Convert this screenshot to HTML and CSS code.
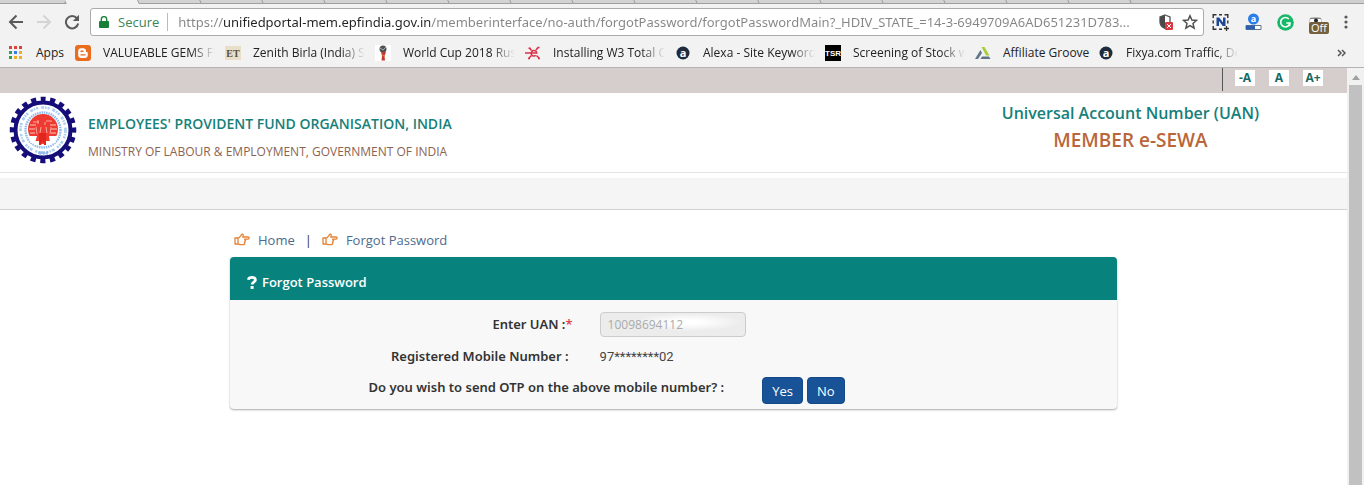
FILE: index.html
```html
<!DOCTYPE html>
<html lang="en">
<head>
<meta charset="utf-8">
<title>Forgot Password</title>
<link rel="stylesheet" href="styles.css">
</head>
<body>
<div class="tabs" aria-hidden="true">
  <i class="tab tab-first"></i><i class="tab tab-active"></i>
  <i class="tab"></i><i class="tab"></i><i class="tab"></i><i class="tab"></i><i class="tab"></i><i class="tab"></i><i class="tab"></i><i class="tab"></i>
  <i class="tab"></i><i class="tab"></i><i class="tab"></i><i class="tab"></i><i class="tab"></i><i class="tab"></i><i class="tab"></i><i class="tab"></i><i class="tab-rest"></i>
</div>
<div class="toolbar">
  <div class="nav-buttons">
    <button class="icon-btn" aria-label="Back"><svg width="16" height="16" viewBox="0 0 16 16" fill="none" stroke="#5a5a5a" stroke-width="2"><path d="M15 8H2M8.500 1.500 2 8l6.500 6.500"/></svg></button>
    <button class="icon-btn" aria-label="Forward"><svg width="16" height="16" viewBox="0 0 16 16" fill="none" stroke="#d4d4d4" stroke-width="2"><path d="M1 8h13M7.500 1.500 14 8l-6.500 6.500"/></svg></button>
    <button class="icon-btn" aria-label="Reload"><svg width="16" height="16" viewBox="0 0 16 16"><path d="M13 4.300A6.200 6.200 0 1 0 14.200 9.500" fill="none" stroke="#5a5a5a" stroke-width="2"/><path d="M15 .8v6.200H8.800z" fill="#5a5a5a"/></svg></button>
  </div>
  <div class="omnibox">
    <svg width="10" height="12" viewBox="0 0 10 12"><path d="M1 5h8a1 1 0 0 1 1 1v5a1 1 0 0 1-1 1H1a1 1 0 0 1-1-1V6a1 1 0 0 1 1-1z" fill="#188038"/><path d="M2.300 6V3.300a2.700 2.700 0 0 1 5.400 0V6" fill="none" stroke="#188038" stroke-width="1.400"/></svg>
    <span class="secure">Secure</span>
    <input class="url" aria-label="Address" value="https://unifiedportal-mem.epfindia.gov.in/memberinterface/no-auth/forgotPassword/forgotPasswordMain?_HDIV_STATE_=14-3-6949709A6AD651231D783...">
    <svg width="14" height="16" viewBox="0 0 14 16"><path d="M6 1 11 3v5c0 3-2 5-5 6.500C2.500 13 1 11 1 8V3z" fill="#fff" stroke="#555" stroke-width="1.300"/><path d="M6 1v13.500C2.500 13 1 11 1 8V3z" fill="#4a4a4a"/><rect x="6" y="8" width="8" height="8" rx="1" fill="#d93a3f"/><path d="m8 10 4 4m0-4-4 4" stroke="#fff"/></svg>
    <button class="icon-btn" aria-label="Bookmark this page"><svg width="16" height="16" viewBox="0 0 16 16"><path d="m8 1.700 1.900 4.300 4.600.4-3.500 3.100 1.100 4.600L8 11.600l-4.100 2.500L5 9.500 1.500 6.400l4.600-.4z" fill="none" stroke="#505050" stroke-width="1.500"/></svg></button>
  </div>
  <div class="extensions">
    <button class="icon-btn" aria-label="Capture"><svg width="18" height="18" viewBox="0 0 18 18"><path d="M1.200 5V1.700h3.300M7 1.700h3M12.500 1.700h3.300V5M1.200 7.500v3M15.800 7.500v3M1.200 13v3.300h3.300M7 16.300h3" fill="none" stroke="#333" stroke-width="1.400"/><path d="M4.500 13V4.500h2.700l3.800 5v-5h2.500V13h-2.700L7 8v5z" fill="#1b4796"/><path d="M12 15.500h5M14.500 13v5" stroke="#333" stroke-width="1.300"/></svg></button>
    <button class="icon-btn" aria-label="Alexa toolbar"><svg width="17" height="18" viewBox="0 0 17 18"><circle cx="8.500" cy="6" r="5.500" fill="#2b7de9"/><text x="8.500" y="9" text-anchor="middle" class="glyph-a">a</text><path d="M1 12.500h15v4H1z" fill="#fff" stroke="#64748b"/><path d="M1 12.500h9v4H1z" fill="#2c5fae"/></svg></button>
    <button class="icon-btn" aria-label="Grammar checker"><svg width="17" height="17" viewBox="0 0 17 17"><circle cx="8.500" cy="8.500" r="8.300" fill="#17b86a"/><path d="M11.800 5A4.700 4.700 0 1 0 13 9H9.300m3.700 0-.5 3" fill="none" stroke="#fff" stroke-width="1.600"/></svg></button>
    <button class="icon-btn off" aria-label="Extension off"><svg width="14" height="10" viewBox="0 0 14 10"><rect x=".5" y=".5" width="12" height="7" rx="3" fill="#fff" stroke="#bbb"/><path d="M1 1.500h11" stroke="#888"/><circle cx="7" cy="3.500" r="2" fill="#222"/></svg><span class="off-badge">Off</span></button>
    <button class="icon-btn" aria-label="Menu"><svg width="4" height="14" viewBox="0 0 4 14" fill="#5a5a5a"><circle cx="2" cy="2" r="1.600"/><circle cx="2" cy="7" r="1.600"/><circle cx="2" cy="12" r="1.600"/></svg></button>
  </div>
</div>
<nav class="bookmarks" aria-label="Bookmarks">
  <a class="bm bm-apps" href="#"><svg width="14" height="14" viewBox="0 0 14 14"><path d="M0 0h3v3H0zM5 0h3v3H5zM10 0h3v3h-3z" fill="#d8433c"/><path d="M0 5h3v3H0z" fill="#2f9e57"/><path d="M5 5h3v3H5z" fill="#3b78e7"/><path d="M10 5h3v3h-3zM5 10h3v3H5zM10 10h3v3h-3z" fill="#ecae29"/><path d="M0 10h3v3H0z" fill="#2f9e57"/></svg><span>Apps</span></a>
  <a class="bm" href="#"><svg width="16" height="16" viewBox="0 0 16 16"><rect width="16" height="16" rx="3" fill="#e96c1f"/><path d="M6 3.300h2.200c1.700 0 2.800 1 2.800 2.700 0 1 .3 1.100 1.200 1.200.5 0 .6.300.6.700v2c0 1.800-1.200 3-3 3H6.200c-1.800 0-3-1.200-3-3V6.300c0-1.800 1.200-3 2.800-3z" fill="#fff"/><path d="M6 6.200h2M6 9.900h4" stroke="#e96c1f" stroke-width="1.400" stroke-linecap="round"/></svg><span class="bm-text">VALUEABLE GEMS FF</span></a>
  <a class="bm" href="#"><svg width="16" height="16" viewBox="0 0 16 16"><rect width="16" height="14" y="1" fill="#e9dfc9"/><text x="8" y="12" text-anchor="middle" class="glyph-et">ET</text></svg><span class="bm-text">Zenith Birla (India) S</span></a>
  <a class="bm" href="#"><svg width="16" height="16" viewBox="0 0 16 16"><rect width="16" height="16" fill="#fff"/><circle cx="8" cy="4" r="3.500" fill="#53514f"/><path d="m5 3 3 2 3-3" stroke="#9bb3b0" fill="none"/><path d="M6 7h5l-1.500 4 .5 4.500H6.500L7 11z" fill="#c53a2c"/><path d="m6.500 9 3.500 3" stroke="#c99a46"/></svg><span class="bm-text">World Cup 2018 Rus</span></a>
  <a class="bm" href="#"><svg width="16" height="16" viewBox="0 0 16 16" fill="none" stroke="#dc2f45" stroke-width="1.500"><path d="M0 8h6M4.500 3l2 2.500M13 2.500 11 5M4 13l2.500-2.500M14 13l-2.500-2.500"/><path d="M6.500 8h5.300a2.800 2.800 0 1 0-1 2.400"/><path d="M3.500 3.200h2M12.500 2.500h2M3 13.500h2M13 13.500h2"/></svg><span class="bm-text">Installing W3 Total C</span></a>
  <a class="bm" href="#"><svg width="16" height="16" viewBox="0 0 16 16"><circle cx="8" cy="8" r="6.500" fill="#1d2b3c"/><text x="8" y="11.500" text-anchor="middle" class="glyph-alexa">a</text></svg><span class="bm-text">Alexa - Site Keyword</span></a>
  <a class="bm" href="#"><svg width="16" height="16" viewBox="0 0 16 16"><rect width="16" height="16" fill="#000"/><text x="8" y="11" text-anchor="middle" class="glyph-tsr">TSR</text></svg><span class="bm-text">Screening of Stock w</span></a>
  <a class="bm bm-short" href="#"><svg width="16" height="16" viewBox="0 0 16 16"><path d="M5.500 5 7 8l-4 6H0z" fill="#60758a"/><path d="M6.500 2h3l5 8.500h-3.500z" fill="#a6ce39"/><path d="M7 11.500h7L15.500 14H5.500z" fill="#60758a"/></svg><span>Affiliate Groove</span></a>
  <a class="bm" href="#"><svg width="16" height="16" viewBox="0 0 16 16"><circle cx="8" cy="8" r="6.500" fill="#1d2b3c"/><text x="8" y="11.500" text-anchor="middle" class="glyph-alexa">a</text></svg><span class="bm-text">Fixya.com Traffic, De</span></a>
  <button class="icon-btn more" aria-label="More bookmarks"><svg width="9" height="8" viewBox="0 0 9 8" fill="none" stroke="#555" stroke-width="1.500"><path d="m1 1 3 3-3 3M5 1l3 3-3 3"/></svg></button>
</nav>
<div class="viewport">
  <div class="page">
    <div class="access-bar">
      <div class="sizes"><button class="size-btn">-A</button><button class="size-btn">A</button><button class="size-btn">A+</button></div>
    </div>
    <header class="header">
      <svg class="logo" width="68" height="68" viewBox="0 0 68 68" role="img" aria-label="EPFO emblem">
        <circle cx="34" cy="34" r="31" fill="none" stroke="#150e78" stroke-width="4.500" stroke-dasharray="5.200 4.539" stroke-dashoffset="2.600" transform="rotate(-90 34 34)"/>
        <circle cx="34" cy="34" r="27.500" fill="#fff" stroke="#150e78" stroke-width="4"/>
        <circle cx="34" cy="34" r="22.500" fill="none" stroke="#a9cdf3" stroke-width="2.600" stroke-dasharray="3 1 1.500 1 2 3"/>
        <circle cx="34" cy="34" r="17.500" fill="none" stroke="#8fbcf0" stroke-width="2.400" stroke-dasharray="1.500 .8"/>
        <circle cx="34" cy="33" r="15" fill="#ee3a30"/>
        <path d="M21 29h6M41 29h6M20 33h6M42 33h6M21 37h5M42 37h5" stroke="#ffc7bc"/>
        <path d="M24 26h6M37 25h6M29 24v4M36 26v3M27 31l1 7M32 31l-1 6M37 31l1 6M42 31l-1 7" stroke="#ffb3a8" stroke-width=".9"/>
        <path d="M19 40h9l-2 7h-4zM40 40h9l-3 7h-5z" fill="#fff"/>
        <path d="M24 45h7v4h-6zM37 45h7l-1 4h-6z" fill="#fff"/>
        <path d="M30 37h7v12h-2l-1-5-2 5h-2z" fill="#e2261e"/>
        <path d="M29 57h10M31 55v5M35 55v5M38 55v4" stroke="#7fa8e4"/>
      </svg>
      <div class="org">
        <div class="org-name">EMPLOYEES' PROVIDENT FUND ORGANISATION, INDIA</div>
        <div class="org-sub">MINISTRY OF LABOUR &amp; EMPLOYMENT, GOVERNMENT OF INDIA</div>
      </div>
      <div class="portal">
        <div class="portal-name">Universal Account Number (UAN)</div>
        <div class="portal-sub">MEMBER e-SEWA</div>
      </div>
    </header>
    <div class="nav-strip"></div>
    <main class="content">
      <svg width="0" height="0" class="defs"><symbol id="hand" viewBox="0 0 16 14"><path d="M1 5h3v6H1zM4 5.200c2-.4 2.800-2.600 3.500-3.700.6-.8 1.900-.3 1.700.9L8.700 4H14c1.500 0 1.500 2.200 0 2.200h-3.500c1.500.2 1.400 1.900 0 1.900 1 .2 1 1.700-.2 1.800.7.500.3 1.700-.8 1.700H7c-1.300 0-2-.6-3-.6" fill="none" stroke="#e58235" stroke-width="1.300" stroke-linejoin="round"/></symbol></svg>
      <nav class="crumbs" aria-label="Breadcrumb">
        <svg width="16" height="14"><use href="#hand"/></svg><a class="crumb" href="#">Home</a>
        <span class="bar">|</span>
        <svg width="16" height="14"><use href="#hand"/></svg><a class="crumb" href="#">Forgot Password</a>
      </nav>
      <section class="card">
        <h1 class="card-head"><svg width="10" height="13" viewBox="0 0 10 13"><path d="M1.300 3.800C2 .8 8.400.5 8.400 3.900c0 2.400-3.300 2.200-3.300 4.600" fill="none" stroke="#fff" stroke-width="2.800"/><path d="M3.600 10h3v3h-3z" fill="#fff"/></svg><span>Forgot Password</span></h1>
        <form class="card-body">
          <div class="row"><label class="label label-req" for="uan">Enter UAN :<span class="req">*</span></label><input id="uan" class="uan" value="10098694112" readonly></div>
          <div class="row"><span class="label">Registered Mobile Number :</span><span class="mobile">97********02</span></div>
          <div class="row row-wide"><span class="label label-wide">Do you wish to send OTP on the above mobile number? :</span><span class="actions"><button type="button" class="btn">Yes</button><button type="button" class="btn">No</button></span></div>
        </form>
      </section>
    </main>
  </div>
  <div class="scrollbar" aria-hidden="true"><svg width="8" height="5" viewBox="0 0 8 5"><path d="M0 5 4 0l4 5z" fill="#a0a0a0"/></svg><div class="thumb"></div></div>
</div>
</body>
</html>
```
FILE: styles.css
```css
* { box-sizing: border-box; }
body {
  margin: 0;
  height: 100vh;
  display: flex;
  flex-direction: column;
  overflow: hidden;
  font-family: "Open Sans", "Noto Sans", sans-serif;
  font-size: 13px;
  color: #333;
  background: #fff;
}
button, input { font: inherit; }
a { color: inherit; text-decoration: none; }
svg { flex: none; }
.icon-btn { display: flex; padding: 0; border: 0; background: none; }

.tabs { display: flex; flex: none; height: 4px; background: #cfcfcf; border-bottom: 1px solid #a0a0a0; }
.tab { flex: none; width: 62px; border-right: 1px solid #909090; transform: skewX(25deg); background: #d3d3d3; }
.tab-first { width: 66px; transform: skewX(-25deg); }
.tab-active { width: 73px; height: 4px; background: #f2f2f2; }
.tab-rest { flex: 1; }

.toolbar { display: flex; flex: none; align-items: center; height: 34px; padding: 2px 16px 0 8px; background: #f2f2f2; }
.nav-buttons { display: flex; gap: 12px; width: 82px; }
.omnibox { display: flex; flex: 1; align-items: center; min-width: 0; height: 28px; padding: 0 5px 0 8px; background: #fff; border: 1px solid #ababab; border-radius: 3px; }
.secure { margin-left: 9px; padding-right: 8px; color: #3b8455; font-size: 13px; border-right: 1px solid #bbb; }
.url {
  flex: 1;
  min-width: 0;
  margin: 0 8px 0 10px;
  padding: 0;
  border: 0;
  outline: 0;
  font-family: "Noto Sans", sans-serif;
  font-size: 13px;
  color: #858585;
  background: linear-gradient(90deg, #858585 45px, #222 45px 252px, #858585 252px);
  background-clip: text;
  -webkit-text-fill-color: transparent;
}
.omnibox .icon-btn { margin-left: 9px; }
.extensions { display: flex; align-items: center; gap: 15px; margin-left: 8px; }
.off { position: relative; margin-right: 6px; }
.off-badge { position: absolute; left: 0; top: 5px; padding: 0 2px; border-radius: 2px; background: #75603c; color: #fff; font-size: 11px; line-height: 12px; }
.glyph-a { font: bold 9px "Open Sans", sans-serif; fill: #fff; }
.glyph-et { font: bold 10px "Liberation Serif", serif; fill: #55503f; }
.glyph-alexa { font: bold 11px "Open Sans", sans-serif; fill: #fff; }
.glyph-tsr { font: bold 8px "Liberation Sans", sans-serif; fill: #fff; }

.bookmarks { display: flex; flex: none; align-items: center; height: 30px; padding: 0 18px 0 9px; color: #222; background: #f2f2f2; border-bottom: 1px solid #b3b3b3; font-size: 12px; }
.bm { display: flex; flex: none; align-items: center; gap: 12px; width: 150px; }
.bm-apps { width: 66px; gap: 13px; }
.bm-short { width: 123px; white-space: nowrap; }
.bm-text { width: 120px; white-space: nowrap; mask-image: linear-gradient(90deg, #000 88px, transparent 112px); }
.more { margin-left: auto; }

.viewport { display: flex; flex: 1; min-height: 0; }
.page { flex: 1; min-width: 0; }
.access-bar { display: flex; justify-content: flex-end; height: 25px; padding-right: 24px; background: #d5cecd; }
.sizes { display: flex; align-items: flex-start; gap: 14px; height: 23px; padding: 2px 0 0 12px; border-left: 1px solid #555; }
.size-btn { width: 20px; height: 16px; padding: 0; border: 0; background: #fff; color: #17695f; font-size: 12px; font-weight: 700; line-height: 16px; }
.header { display: flex; height: 80px; padding: 3px 88px 0 9px; border-bottom: 1px solid #e4e4e4; }
.org { margin-left: 11px; padding-top: 18px; }
.org-name { color: #16807a; font-size: 14px; font-weight: 600; line-height: 20px; }
.org-sub { margin-top: 8px; color: #8c6350; font-size: 12px; line-height: 20px; }
.portal { margin-left: auto; padding-top: 6px; text-align: center; }
.portal-name { color: #16807a; font-size: 16px; font-weight: 600; line-height: 22px; }
.portal-sub { color: #b9663a; font-size: 19px; font-weight: 600; line-height: 32px; }
.nav-strip { height: 32px; margin-top: 5px; background: #f5f5f5; border-bottom: 1px solid #d0d0d0; }

.content { max-width: 887px; margin: 0 auto; padding-top: 19px; }
.defs { display: block; }
.crumbs { display: flex; align-items: center; height: 22px; padding-left: 4px; }
.crumb { margin-left: 8px; color: #4b6b8e; }
.bar { margin: 0 10px; }
.card { margin-top: 6px; background: #f8f8f8; border-radius: 4px; box-shadow: 0 1px 2px #aaa; }
.card-head { display: flex; align-items: center; gap: 5px; height: 43px; margin: 0; padding: 7px 17px 0; border-radius: 4px 4px 0 0; background: #07827d; color: #fff; font-size: 13px; font-weight: 600; }
.card-body { padding: 8px 0 5px; }
.row { display: grid; grid-template-columns: 5fr 7fr; align-items: center; height: 32px; }
.row-wide { grid-template-columns: 3fr 2fr; }
.label { padding-right: 31px; text-align: right; font-family: "Noto Sans", sans-serif; font-weight: 600; white-space: nowrap; }
.label-req { padding-right: 27px; }
.label-wide { padding: 0 38px 2px 0; }
.req { color: #e04848; }
.mobile { font-family: Roboto, sans-serif; color: #444; }
.uan { width: 146px; height: 25px; padding: 0 7px; border: 1px solid #ccc; border-radius: 4px; color: #aaa; font-size: 12px; background: radial-gradient(ellipse at 60% 40%, #fff 10%, #ececec 45%); }
.actions { display: flex; gap: 4px; padding-top: 5px; }
.btn { height: 27px; padding: 0 9px; border: 1px solid #134a87; border-radius: 4px; color: #fff; background: #185397; }

.scrollbar { display: flex; flex-direction: column; align-items: center; flex: none; width: 17px; padding-top: 7px; background: #f1f1f1; }
.thumb { flex: 1; width: 13px; margin-top: 5px; background: #c1c1c1; }
```
